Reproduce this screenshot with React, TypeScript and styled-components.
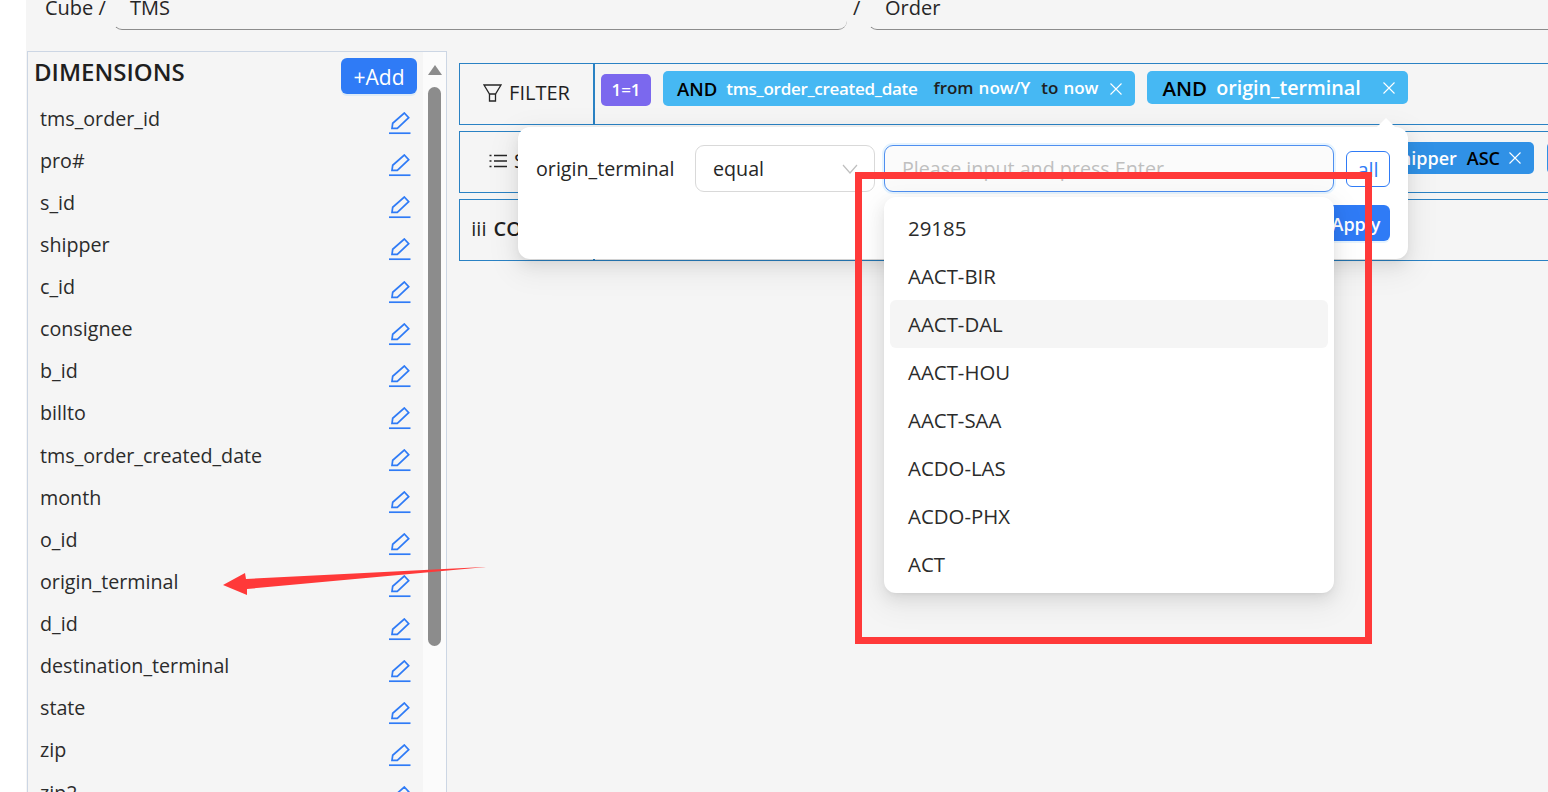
import React from "react";
import styled, { createGlobalStyle } from "styled-components";

const GlobalStyle = createGlobalStyle`
  html, body {
    margin: 0;
    padding: 0;
    background: #ffffff;
  }
  * {
    box-sizing: border-box;
  }
  body {
    font-family: "Open Sans", "Noto Sans", "Liberation Sans", sans-serif;
    color: #262626;
  }
`;

const DIMENSIONS = [
  "tms_order_id",
  "pro#",
  "s_id",
  "shipper",
  "c_id",
  "consignee",
  "b_id",
  "billto",
  "tms_order_created_date",
  "month",
  "o_id",
  "origin_terminal",
  "d_id",
  "destination_terminal",
  "state",
  "zip",
  "zip2",
];

const OPTIONS = [
  "29185",
  "AACT-BIR",
  "AACT-DAL",
  "AACT-HOU",
  "AACT-SAA",
  "ACDO-LAS",
  "ACDO-PHX",
  "ACT",
];

const EditIcon = () => (
  <EditSvg width="22" height="23" viewBox="0 0 22 23" fill="none" stroke="#2f7bf6" strokeWidth="1.7">
    <path d="M3 16.4 L3.7 11.3 L15.3 1 L19.7 5.7 L8.3 16.4 Z" />
    <path d="M0 21.2 H21.5" />
  </EditSvg>
);

const CloseIcon = () => (
  <svg width="12" height="12" viewBox="0 0 12 12" stroke="#ffffff" strokeWidth="1.1">
    <path d="M0.5 0.5 L11.5 11.5 M11.5 0.5 L0.5 11.5" />
  </svg>
);

const FunnelIcon = () => (
  <svg width="19" height="18" viewBox="0 0 19 18" fill="none" stroke="#262626" strokeWidth="1.3">
    <path d="M1 1 H18 L12.5 10 H6.5 Z" />
    <path d="M6.5 10 V17 H12.5 V10" />
  </svg>
);

const ListIcon = () => (
  <svg width="18" height="14" viewBox="0 0 18 14" stroke="#262626" strokeWidth="1.3">
    <path d="M5 1.5 H18 M5 7 H18 M5 12.5 H18 M0.5 1.5 H2.5 M0.5 7 H2.5 M0.5 12.5 H2.5" />
  </svg>
);

const ChevronIcon = () => (
  <svg width="16" height="10" viewBox="0 0 16 10" fill="none" stroke="#bfbfbf" strokeWidth="1.2">
    <path d="M1 1 L8 9 L15 1" />
  </svg>
);

export default function App() {
  return (
    <Page>
      <GlobalStyle />
      <TopBar>
        <Crumb>Cube /</Crumb>
        <CrumbField $width={734}>TMS</CrumbField>
        <Slash>/</Slash>
        <CrumbField $width={700}>Order</CrumbField>
      </TopBar>

      <Body>
        <Sidebar>
          <SidePane>
            <SideHeader>
              <SideTitle>DIMENSIONS</SideTitle>
              <AddButton>+Add</AddButton>
            </SideHeader>
            {DIMENSIONS.map((name) => (
              <DimensionRow key={name}>
                <span>{name}</span>
                <EditIcon />
              </DimensionRow>
            ))}
          </SidePane>
          <ScrollTrack>
            <ScrollArrow />
            <ScrollThumb />
          </ScrollTrack>
        </Sidebar>

        <Workspace>
          <QueryRow>
            <QueryLabel>
              <FunnelIcon />
              FILTER
            </QueryLabel>
            <QueryChips>
              <LogicChip>1=1</LogicChip>
              <FilterChip $height={35} $pad={14}>
                <Op $size={18.5}>AND</Op>
                <FieldName $size={17} $track={-0.3}>
                  tms_order_created_date
                </FieldName>
                <RangeText $lead={16}>from</RangeText>
                <RangeValue>now/Y</RangeValue>
                <RangeText $lead={11}>to</RangeText>
                <RangeValue>now</RangeValue>
                <ChipClose $lead={12}>
                  <CloseIcon />
                </ChipClose>
              </FilterChip>
              <FilterChip $height={33} $pad={15}>
                <Op $size={20.5}>AND</Op>
                <FieldName $size={19.7}>origin_terminal</FieldName>
                <ChipClose $lead={22}>
                  <CloseIcon />
                </ChipClose>
              </FilterChip>
            </QueryChips>
          </QueryRow>

          <QueryRow>
            <QueryLabel>
              <ListIcon />
              SORT
            </QueryLabel>
            <SortChips>
              <SortChip>
                <FieldName $size={18}>shipper</FieldName>
                <SortOrder>ASC</SortOrder>
                <ChipClose $lead={8}>
                  <CloseIcon />
                </ChipClose>
              </SortChip>
              <SortChip />
            </SortChips>
          </QueryRow>

          <QueryRow>
            <QueryLabel $strong>
              <ColumnMark>iii</ColumnMark>
              COLUMN
            </QueryLabel>
          </QueryRow>
        </Workspace>
      </Body>

      <Popover>
        <PopoverArrow />
        <PopoverLine>
          <PopoverField>origin_terminal</PopoverField>
          <OperatorSelect>
            equal
            <ChevronIcon />
          </OperatorSelect>
          <ValueInput placeholder="Please input and press Enter" readOnly />
          <AllButton>all</AllButton>
        </PopoverLine>
        <PopoverFooter>
          <ApplyButton>Apply</ApplyButton>
        </PopoverFooter>
      </Popover>

      <Dropdown>
        {OPTIONS.map((option) => (
          <OptionRow key={option} $active={option === "AACT-DAL"}>
            {option}
          </OptionRow>
        ))}
      </Dropdown>

      <RedFrame />
      <RedArrow width="264" height="30" viewBox="0 0 264 30">
        <polygon points="1,19 23,7 24,13 262,1 264,1 25,23 25,29" fill="#ff3939" />
      </RedArrow>
    </Page>
  );
}

const Page = styled.div`
  position: relative;
  width: 1548px;
  height: 792px;
  padding-left: 26px;
  overflow: hidden;
`;

const TopBar = styled.div`
  display: flex;
  align-items: flex-start;
  height: 51px;
  margin-right: -700px;
  background: #f5f5f5;
  padding-left: 19px;
  font-size: 20px;
`;

const Crumb = styled.div`
  width: 68px;
  height: 16px;
  line-height: 16px;
`;

const CrumbField = styled.div<{ $width: number }>`
  flex: none;
  width: ${(p) => p.$width}px;
  height: 30px;
  line-height: 16px;
  padding-left: 16px;
  border-bottom: 1px solid #8c8c8c;
  border-left: 1px solid transparent;
  border-bottom-left-radius: 9px;
  border-bottom-right-radius: 9px;
`;

const Slash = styled.div`
  width: 21px;
  height: 16px;
  line-height: 16px;
  padding-left: 6px;
`;

const Body = styled.div`
  display: flex;
  align-items: flex-start;
  height: 741px;
  padding-left: 1px;
  background: #f5f5f5;
`;

const Sidebar = styled.div`
  flex: none;
  display: flex;
  width: 420px;
  height: 790px;
  border: 1px solid #ccd6e4;
`;

const SidePane = styled.div`
  flex: 1;
  padding-top: 6px;
`;

const SideHeader = styled.div`
  display: flex;
  justify-content: space-between;
  align-items: flex-start;
  height: 39px;
  padding-left: 6px;
  margin-right: 6px;
`;

const SideTitle = styled.div`
  font-size: 24px;
  font-weight: 600;
  line-height: 28px;
  color: #1f1f1f;
`;

const AddButton = styled.div`
  width: 76px;
  height: 36px;
  padding-top: 2px;
  border-radius: 6px;
  background: #2f7bf6;
  box-shadow: 0 2px 0 rgba(5, 145, 255, 0.1);
  color: #ffffff;
  font-size: 21px;
  line-height: 34px;
  text-align: center;
`;

const DimensionRow = styled.div`
  display: flex;
  justify-content: space-between;
  align-items: center;
  height: 42.13px;
  padding: 0 12px;
  font-size: 19.7px;
  color: #2b2b2b;
`;

const EditSvg = styled.svg`
  flex: none;
  margin-top: 11px;
`;

const ScrollTrack = styled.div`
  flex: none;
  display: flex;
  flex-direction: column;
  align-items: center;
  width: 23px;
  padding-top: 13px;
  background: #fbfbfb;
`;

const ScrollArrow = styled.div`
  width: 0;
  height: 0;
  border-left: 7.5px solid transparent;
  border-right: 7.5px solid transparent;
  border-bottom: 10px solid #8c8c8c;
`;

const ScrollThumb = styled.div`
  width: 13px;
  height: 559px;
  margin-top: 12px;
  border-radius: 7px;
  background: #8c8c8c;
`;

const Workspace = styled.div`
  flex: none;
  display: flex;
  flex-direction: column;
  gap: 6px;
  width: 1200px;
  margin-left: 12px;
  margin-top: 12px;
`;

const QueryRow = styled.div`
  display: flex;
  height: 62px;
  border: 1px solid #2a82c4;
`;

const QueryLabel = styled.div<{ $strong?: boolean }>`
  flex: none;
  display: flex;
  align-items: center;
  justify-content: center;
  gap: 7px;
  width: 135px;
  padding-bottom: 3px;
  border-right: 2px solid #2a82c4;
  font-size: 20px;
  font-weight: ${(p) => (p.$strong ? 600 : 500)};
  color: #1f1f1f;
`;

const ColumnMark = styled.span`
  font-weight: 400;
`;

const QueryChips = styled.div`
  display: flex;
  align-items: flex-start;
  gap: 12px;
  padding: 7px 0 0 6px;
`;

const SortChips = styled.div`
  display: flex;
  align-items: flex-start;
  gap: 13px;
  padding: 10px 0 0 784px;
`;

const LogicChip = styled.div`
  width: 50px;
  height: 32px;
  margin-top: 3px;
  border-radius: 5px;
  background: #7b68ee;
  color: #ffffff;
  font-size: 17px;
  font-weight: 600;
  line-height: 31px;
  text-align: center;
`;

const FilterChip = styled.div<{ $height: number; $pad: number }>`
  display: flex;
  align-items: center;
  height: ${(p) => p.$height}px;
  padding: 0 13px 0 ${(p) => p.$pad}px;
  border-radius: 5px;
  background: #46b8f3;
  white-space: nowrap;
`;

const SortChip = styled.div`
  display: flex;
  align-items: center;
  flex: none;
  min-width: 60px;
  height: 32px;
  padding: 0 13px 0 12px;
  border-radius: 5px;
  background: #3091e6;
  white-space: nowrap;
`;

const Op = styled.span<{ $size: number }>`
  margin-right: 9px;
  color: #000000;
  font-size: ${(p) => p.$size}px;
  font-weight: 600;
`;

const SortOrder = styled.span`
  margin-left: 10px;
  margin-right: 1px;
  color: #000000;
  font-size: 18px;
  font-weight: 600;
`;

const FieldName = styled.span<{ $size: number; $track?: number }>`
  color: #ffffff;
  font-size: ${(p) => p.$size}px;
  font-weight: 600;
  letter-spacing: ${(p) => p.$track ?? 0}px;
`;

const RangeText = styled.span<{ $lead: number }>`
  margin-left: ${(p) => p.$lead}px;
  margin-bottom: 3px;
  color: #1f1f1f;
  font-size: 17px;
  font-weight: 600;
`;

const RangeValue = styled.span`
  margin-left: 5px;
  margin-bottom: 3px;
  color: #ffffff;
  font-size: 17px;
  font-weight: 600;
`;

const ChipClose = styled.span<{ $lead: number }>`
  display: inline-flex;
  margin-left: ${(p) => p.$lead}px;
`;

const Popover = styled.div`
  position: absolute;
  left: 518px;
  top: 127px;
  width: 890px;
  height: 132px;
  padding: 18px;
  border-radius: 12px;
  background: #ffffff;
  box-shadow:
    0 6px 16px rgba(0, 0, 0, 0.08),
    0 3px 6px -4px rgba(0, 0, 0, 0.12),
    0 9px 28px 8px rgba(0, 0, 0, 0.05);
`;

const PopoverArrow = styled.div`
  position: absolute;
  right: 13px;
  top: -9px;
  width: 0;
  height: 0;
  border-left: 9px solid transparent;
  border-right: 9px solid transparent;
  border-bottom: 9px solid #ffffff;
`;

const PopoverLine = styled.div`
  display: flex;
  align-items: center;
`;

const PopoverField = styled.div`
  width: 159px;
  font-size: 19.7px;
`;

const OperatorSelect = styled.div`
  display: flex;
  align-items: center;
  justify-content: space-between;
  width: 180px;
  height: 47px;
  margin-right: 9px;
  padding: 0 16px 0 17px;
  border: 1px solid #d9d9d9;
  border-radius: 9px;
  font-size: 19.7px;
`;

const ValueInput = styled.input`
  width: 450px;
  height: 47px;
  margin-right: 12px;
  padding: 0 17px;
  border: 1px solid #4f8ff0;
  border-radius: 9px;
  outline: none;
  background: #fbfbfb;
  box-shadow: 0 0 0 2px rgba(5, 145, 255, 0.1);
  font-family: inherit;
  font-size: 19.7px;
  &::placeholder {
    color: #bfbfbf;
  }
`;

const AllButton = styled.div`
  width: 44px;
  height: 36px;
  border: 1px solid #2f7bf6;
  border-radius: 6px;
  color: #2f7bf6;
  font-size: 20px;
  line-height: 35px;
  text-align: center;
`;

const PopoverFooter = styled.div`
  display: flex;
  justify-content: flex-end;
  margin-top: 13px;
`;

const ApplyButton = styled.div`
  width: 68px;
  height: 36px;
  border-radius: 6px;
  background: #2f7bf6;
  box-shadow: 0 2px 0 rgba(5, 145, 255, 0.1);
  color: #ffffff;
  font-size: 18px;
  font-weight: 600;
  line-height: 38px;
  text-align: center;
`;

const Dropdown = styled.div`
  position: absolute;
  left: 884px;
  top: 197px;
  width: 450px;
  height: 396px;
  padding: 7px 6px;
  border-radius: 12px;
  background: #ffffff;
  box-shadow:
    0 6px 16px rgba(0, 0, 0, 0.08),
    0 3px 6px -4px rgba(0, 0, 0, 0.12),
    0 9px 28px 8px rgba(0, 0, 0, 0.05);
`;

const OptionRow = styled.div<{ $active?: boolean }>`
  height: 48px;
  padding: 0 18px;
  border-radius: 6px;
  background: ${(p) => (p.$active ? "#f5f5f5" : "transparent")};
  color: #2b2b2b;
  font-size: 20.4px;
  line-height: 48px;
`;

const RedFrame = styled.div`
  position: absolute;
  left: 855px;
  top: 172px;
  width: 517px;
  height: 472px;
  border: 7px solid #ff3939;
`;

const RedArrow = styled.svg`
  position: absolute;
  left: 222px;
  top: 566px;
`;
